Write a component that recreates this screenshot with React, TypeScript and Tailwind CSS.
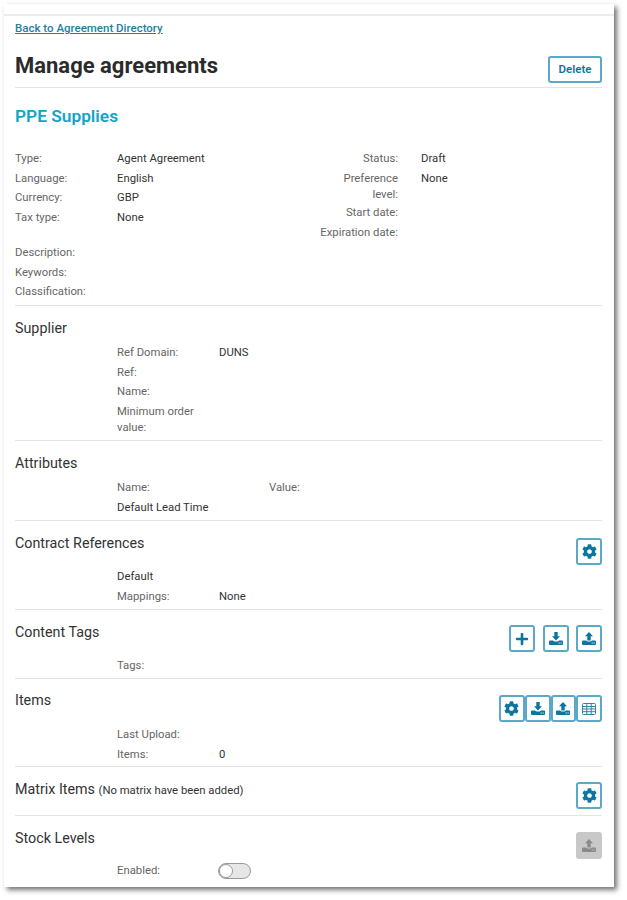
import React from "react";
import { FaCog, FaPlus } from "react-icons/fa";

function Tray({ up, color = "#0b76a0" }: { up?: boolean; color?: string }) {
  return (
    <svg width="14" height="13" viewBox="0 0 14 13" fill={color}>
      {up ? (
        <path d="M7 0 L11 4.2 H8.7 V8.4 H5.3 V4.2 H3 Z" />
      ) : (
        <path d="M5.3 0 H8.7 V4.2 H11 L7 8.4 L3 4.2 H5.3 Z" />
      )}
      <path fillRule="evenodd" d="M1 8.6 H4 L5.4 9.6 H8.6 L10 8.6 H13 a1 1 0 0 1 1 1 V12 a1 1 0 0 1 -1 1 H1 a1 1 0 0 1 -1 -1 V9.6 a1 1 0 0 1 1 -1 Z M9.6 10.4 v1.1 h1.1 v-1.1 Z M11.6 10.4 v1.1 h1.1 v-1.1 Z" />
    </svg>
  );
}

function GridIcon() {
  return (
    <svg width="14" height="12" viewBox="0 0 14 12" fill="none" stroke="#2b86ab" strokeWidth="1">
      <rect x="0.5" y="0.5" width="13" height="11" rx="1" />
      <path d="M0.5 3.5 H13.5 M0.5 6 H13.5 M0.5 8.7 H13.5 M4.8 0.5 V11.5 M9.2 0.5 V11.5" />
    </svg>
  );
}

function IconBtn({ children, cls = "" }: { children: React.ReactNode; cls?: string }) {
  return (
    <button className={"flex h-[27px] w-[26px] items-center justify-center rounded-[3px] border-2 border-[#5ba9c6] bg-white text-[#0b76a0] " + cls}>
      {children}
    </button>
  );
}

function Row({ label, value, h = "h-[19.7px]" }: { label: string; value?: string; h?: string }) {
  return (
    <div className={"flex " + h}>
      <div className="w-[102px] pr-3 text-[#666666]">{label}</div>
      <div className="text-[#333333]">{value}</div>
    </div>
  );
}

function Divider() {
  return <div className="h-px bg-[#e4e4e4]" />;
}

export default function App() {
  return (
    <div className="h-[900px] w-[627px] bg-white pl-[4px] pt-[4px] text-[11.3px] leading-[22px]" style={{ fontFamily: 'Roboto, sans-serif' }}>
      <div className="h-[883px] w-[610px] bg-white shadow-[3px_3px_5px_rgba(0,0,0,0.55)]">
        <div className="h-[10px]" />
        <div className="h-[2px] bg-[#ececec]" />
        <div className="pl-[11px] pr-[12px]">
          <a className="block h-[25px] pt-[2px] text-[11.5px] font-medium leading-[20px] text-[#1f7ea3] underline">Back to Agreement Directory</a>
          <div className="flex h-[47px] items-start justify-between border-b border-[#e4e4e4] pt-[9px]">
            <h1 className="text-[22px] font-bold leading-[32px] text-[#2b2b2b]">Manage agreements</h1>
            <button className="mt-[6px] h-[27px] w-[54px] rounded-[3px] border-2 border-[#5ba9c6] text-[11.5px] font-semibold leading-none text-[#0b76a0]">Delete</button>
          </div>
          <h2 className="h-[60px] pt-[14px] text-[17.3px] font-semibold leading-[28px] text-[#12a5c9]">PPE Supplies</h2>

          <div className="flex h-[94px]">
            <div className="w-[305px]">
              <Row label="Type:" value="Agent Agreement" />
              <Row label="Language:" value="English" />
              <Row label="Currency:" value="GBP" />
              <Row label="Tax type:" value="None" />
            </div>
            <div className="-ml-[20px] flex flex-col">
              {[
                ["Status:", "Draft", "h-[19.7px]"],
                ["Preference\nlevel:", "None", "h-[34px]"],
                ["Start date:", "", "h-[20px]"],
                ["Expiration date:", "", "h-[19.7px]"],
              ].map(([l, v, h]) => (
                <div key={l} className={"flex " + h}>
                  <div className="w-[98px] whitespace-pre-line pt-[3px] text-right leading-[16px] text-[#666666]">{l}</div>
                  <div className="pl-[23px] text-[#333333]">{v}</div>
                </div>
              ))}
            </div>
          </div>
          <div className="h-[63px]">
            <Row label="Description:" />
            <Row label="Keywords:" />
            <Row label="Classification:" />
          </div>
          <Divider />

          <h3 className="h-[36px] pt-[11px] text-[14.3px] leading-[22px] text-[#333333]">Supplier</h3>
          <div className="h-[98px] pl-[102px]">
            <Row label="Ref Domain:" value="DUNS" />
            <Row label="Ref:" />
            <Row label="Name:" />
            <div className="flex">
              <div className="w-[102px] pr-3 pt-[3px] leading-[16px] text-[#666666]">Minimum order value:</div>
            </div>
          </div>
          <Divider />

          <h3 className="h-[36px] pt-[11px] text-[14.3px] leading-[22px] text-[#333333]">Attributes</h3>
          <div className="h-[43px] pl-[102px]">
            <div className="flex h-[19.7px]">
              <div className="w-[152px] text-[#666666]">Name:</div>
              <div className="text-[#666666]">Value:</div>
            </div>
            <div className="text-[#333333]">Default Lead Time</div>
          </div>
          <Divider />

          <div className="flex h-[45px] items-start justify-between pt-[11px]">
            <h3 className="text-[14.3px] leading-[22px] text-[#333333]">Contract References</h3>
            <IconBtn cls="mt-[6px]"><FaCog size={15} /></IconBtn>
          </div>
          <div className="h-[43px] pl-[102px]">
            <div className="h-[19.7px] text-[#333333]">Default</div>
            <Row label="Mappings:" value="None" />
          </div>
          <Divider />

          <div className="flex h-[45px] items-start justify-between pt-[11px]">
            <h3 className="text-[14.3px] leading-[22px] text-[#333333]">Content Tags</h3>
            <div className="mt-[4px] flex gap-[7.5px]">
              <IconBtn><FaPlus size={14} /></IconBtn>
              <IconBtn><Tray /></IconBtn>
              <IconBtn><Tray up /></IconBtn>
            </div>
          </div>
          <div className="h-[23px] pl-[102px]">
            <Row label="Tags:" />
          </div>
          <Divider />

          <div className="flex h-[45px] items-start justify-between pt-[10px]">
            <h3 className="text-[14.3px] leading-[22px] text-[#333333]">Items</h3>
            <div className="mt-[6px] flex">
              <IconBtn cls="!w-[25.75px]"><FaCog size={15} /></IconBtn>
              <IconBtn cls="!w-[25.75px]"><Tray /></IconBtn>
              <IconBtn cls="!w-[25.75px]"><Tray up /></IconBtn>
              <IconBtn cls="!w-[25.75px]"><GridIcon /></IconBtn>
            </div>
          </div>
          <div className="h-[42px] pl-[102px]">
            <Row label="Last Upload:" />
            <Row label="Items:" value="0" />
          </div>
          <Divider />

          <div className="flex h-[48px] items-start justify-between pt-[11px]">
            <h3 className="text-[14.3px] leading-[22px] text-[#333333]">
              Matrix Items <span className="text-[11.3px]">(No matrix have been added)</span>
            </h3>
            <IconBtn cls="mt-[4px]"><FaCog size={15} /></IconBtn>
          </div>
          <Divider />

          <div className="flex h-[44px] items-start justify-between pt-[11px]">
            <h3 className="text-[14.3px] leading-[22px] text-[#333333]">Stock Levels</h3>
            <button className="mt-[5px] flex h-[27px] w-[26px] items-center justify-center rounded-[3px] bg-[#c8c8c8]">
              <Tray up color="#8a8a8a" />
            </button>
          </div>
          <div className="flex pl-[102px]">
            <div className="w-[101px] text-[#666666]">Enabled:</div>
            <div className="relative mt-[3px] h-[16px] w-[33px] rounded-full border border-[#999999] bg-[#e6e6e6]">
              <div className="h-[14px] w-[14px] rounded-full border border-[#999999] bg-white" />
            </div>
          </div>
        </div>
      </div>
    </div>
  );
}
